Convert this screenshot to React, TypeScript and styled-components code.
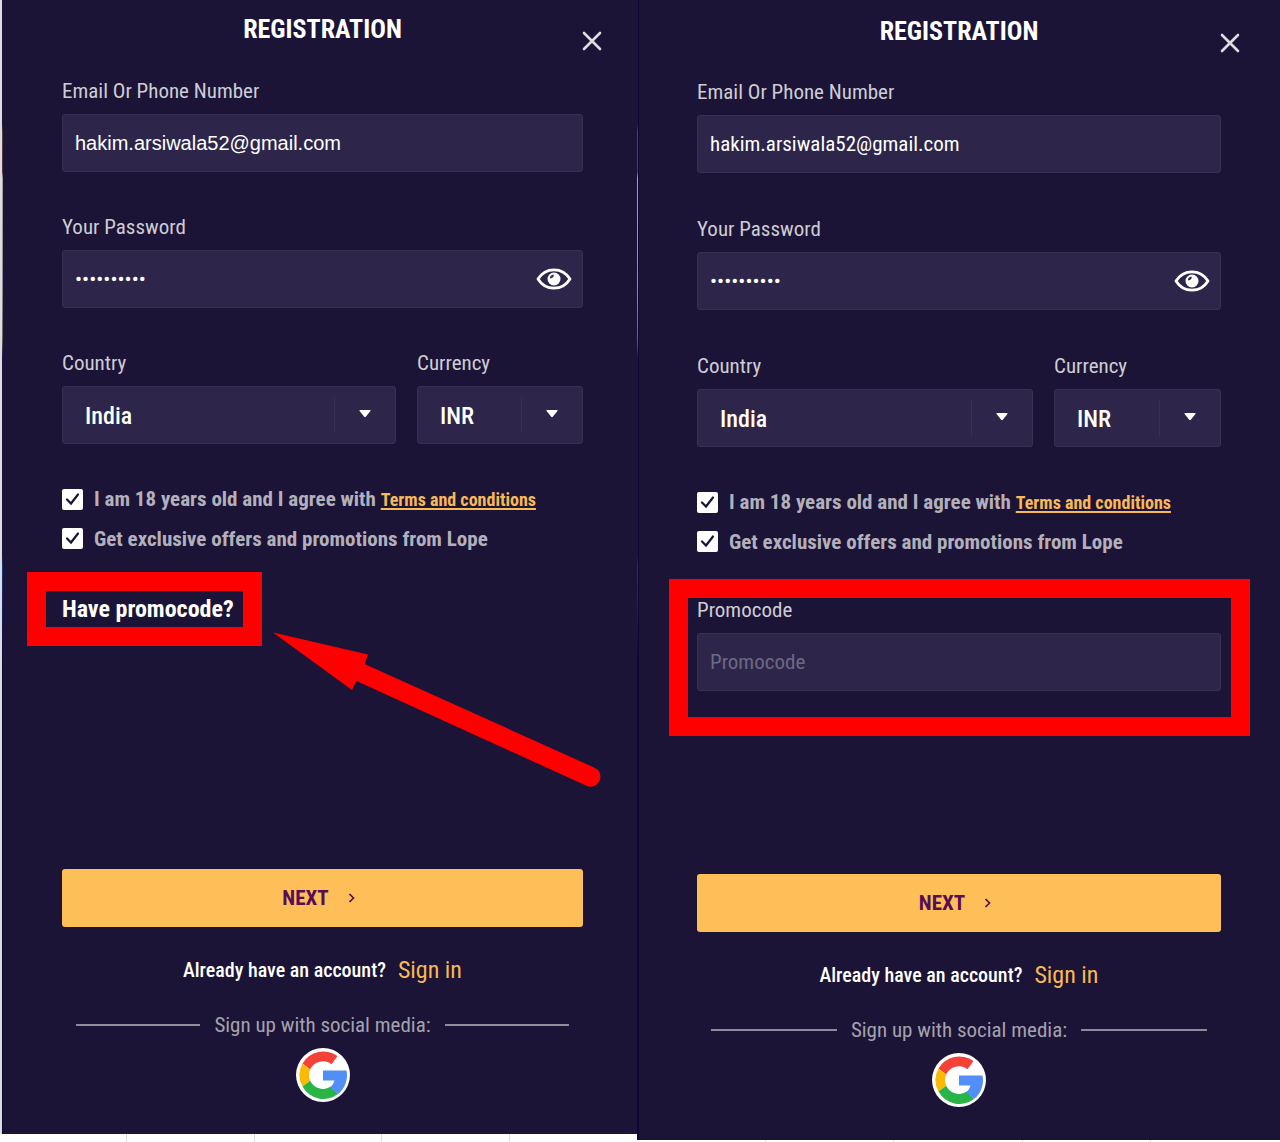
import React, { useId, useState } from "react";
import styled, { createGlobalStyle } from "styled-components";

const condensed = `"Roboto Condensed", "Liberation Sans Narrow", Roboto, "Liberation Sans", sans-serif`;
const regular = `"Liberation Sans", Arial, sans-serif`;

const edgeGlow = `linear-gradient(
  #1b1437 124px, #5c4040 132px, #5a3733 172px, #a5a2a6 178px, #8f8c99 290px,
  #6b6258 340px, #1b1437 358px, #1b1437 555px, #123a80 568px, #151a58 620px, #0c0a2c 660px
)`;

const GlobalStyle = createGlobalStyle`
  *, *::before, *::after { box-sizing: border-box; }
  body { margin: 0; background: #fff; font-family: ${condensed}; color: #fff; }
  button, input, select { font-family: inherit; color: inherit; margin: 0; }
`;

const Page = styled.main`
  display: grid;
  grid-template-columns: 637fr 643fr;
  align-items: start;
  min-height: 100vh;
`;

const Side = styled.section`
  display: flex;
  flex-direction: column;
  min-height: 100vh;
`;

const Panel = styled.form<{ $first: boolean }>`
  flex: 1;
  display: flex;
  flex-direction: column;
  background: ${edgeGlow} ${(p) => (p.$first ? "2px" : "0")} 0 / 1px 100% no-repeat,
    linear-gradient(90deg, ${(p) => (p.$first ? "#dcdce4" : "#0c0733")} 2px, #1b1437 2px);
  padding: ${(p) => (p.$first ? "0 54px 32px 62px" : "2px 59px 33px 60px")};
`;

const Sheet = styled.div<{ $height: number }>`
  display: grid;
  grid-template-columns: repeat(5, 1fr);
  height: ${(p) => p.$height}px;
  background: #fff;
`;

const Cell = styled.span`
  border-right: 1px solid #dcdce0;
  &:last-child { border-right: 0; }
`;

const Header = styled.header<{ $height: number }>`
  position: relative;
  padding-top: 13px;
  height: ${(p) => p.$height}px;
  text-align: center;
`;

const Title = styled.h1`
  margin: 0;
  font-size: 26px;
  line-height: 32px;
  font-weight: 700;
`;

const Close = styled.button`
  position: absolute;
  right: -20px;
  top: 30px;
  display: flex;
  padding: 0;
  border: 0;
  background: none;
`;

const Fields = styled.div<{ $gap: number }>`
  display: flex;
  flex-direction: column;
  gap: ${(p) => p.$gap}px;
`;

const FieldBox = styled.div`
  display: flex;
  flex-direction: column;
  gap: 11px;
  min-width: 0;
`;

const Label = styled.label`
  font-size: 21px;
  line-height: 24px;
  color: #cfcdd4;
`;

const Control = styled.div`
  position: relative;
  display: flex;
  align-items: center;
  height: 58px;
  background: #2d264a;
  border: 1px solid #383154;
  border-radius: 3px;
`;

const TextInput = styled.input<{ $plain?: boolean }>`
  flex: 1;
  min-width: 0;
  height: 100%;
  padding: 0 12px;
  border: 0;
  outline: 0;
  background: none;
  font-family: ${(p) => (p.$plain ? regular : condensed)};
  font-size: ${(p) => (p.$plain ? 20 : 21)}px;
  &::placeholder { color: #6f6984; opacity: 1; }
`;

const Eye = styled.button`
  display: flex;
  margin-right: 10px;
  padding: 0;
  border: 0;
  background: none;
`;

const Split = styled.div`
  display: grid;
  grid-template-columns: 334fr 166fr;
  gap: 21px;
`;

const Select = styled.select`
  appearance: none;
  flex: 1;
  min-width: 0;
  height: 100%;
  padding: 2px 62px 0 22px;
  border: 0;
  outline: 0;
  background: none;
  font-size: 24px;
  font-weight: 500;
  option { color: #000; }
`;

const Arrow = styled.span`
  position: absolute;
  right: 0;
  top: 10px;
  bottom: 10px;
  width: 61px;
  display: flex;
  align-items: center;
  justify-content: center;
  border-left: 1px solid #383154;
  pointer-events: none;
`;

const Checks = styled.div`
  display: flex;
  flex-direction: column;
  gap: 18px;
  margin: 45px 0 46px;
`;

const CheckRow = styled.div`
  display: flex;
  align-items: center;
  gap: 11px;
  height: 21px;
  font-size: 21px;
  line-height: 24px;
  font-weight: 700;
  color: #b3b0bb;
  white-space: nowrap;
`;

const Tick = styled.span`
  display: grid;
  width: 21px;
  height: 21px;
  > * { grid-area: 1 / 1; }
  svg { opacity: 0; pointer-events: none; }
  input:checked + svg { opacity: 1; }
`;

const TickBox = styled.input`
  appearance: none;
  width: 21px;
  height: 21px;
  margin: 0;
  border-radius: 2px;
  background: #fff;
`;

const Terms = styled.a`
  font-size: 18px;
  color: #f9b953;
  text-decoration: underline;
  text-decoration-thickness: 2px;
  text-underline-offset: 2px;
`;

const Slot = styled.div`
  position: relative;
  display: flex;
  flex-direction: column;
  align-items: stretch;
`;

const Toggle = styled.button`
  position: relative;
  align-self: flex-start;
  padding: 0;
  border: 0;
  background: none;
  font-size: 24px;
  line-height: 28px;
  font-weight: 700;
`;

const Frame = styled.span<{ $inset: string }>`
  position: absolute;
  inset: ${(p) => p.$inset};
  border: 19px solid #fe0000;
  pointer-events: none;
`;

const Pointer = styled.svg`
  position: absolute;
  left: 210px;
  top: 36px;
  pointer-events: none;
`;

const Footer = styled.footer`
  display: flex;
  flex-direction: column;
  align-items: stretch;
  margin-top: auto;
`;

const Next = styled.button`
  display: flex;
  align-items: center;
  justify-content: center;
  gap: 19px;
  height: 58px;
  padding: 0 8px 0 0;
  border: 0;
  border-radius: 3px;
  background: #febf58;
  color: #580d55;
  font-size: 21px;
  font-weight: 700;
`;

const Already = styled.p`
  display: flex;
  align-items: center;
  justify-content: center;
  gap: 12px;
  margin: 28px 0;
  font-size: 20px;
  line-height: 30px;
  font-weight: 500;
  white-space: nowrap;
`;

const SignIn = styled.a`
  font-size: 24px;
  font-weight: 400;
  color: #f9b953;
  text-decoration: none;
`;

const Social = styled.div`
  display: flex;
  align-items: center;
  gap: 14px;
  padding: 0 14px;
  margin-bottom: 11px;
  font-size: 21px;
  line-height: 24px;
  color: #a5a2ac;
  white-space: nowrap;
  &::before, &::after { content: ""; flex: 1; height: 2px; background: #8f8c99; }
`;

const Google = styled.button`
  display: flex;
  align-self: center;
  padding: 0;
  border: 0;
  border-radius: 50%;
  background: #fff;
`;

const GoogleMark = () => (
  <svg width="54" height="54" viewBox="0 0 54 54" aria-hidden="true">
    <path d="M6.500 15.500A24 24 0 0 1 41.500 8L35.500 16.200A14 14 0 0 0 14.200 21.500Z" fill="#f44336" />
    <path d="M6.500 15.500A24 24 0 0 0 6.500 38.600L14.200 32.800A14 14 0 0 1 14.200 21.500Z" fill="#fbbb05" />
    <path d="M6.500 38.600A24 24 0 0 0 42 46L34.600 38.600A14 14 0 0 1 14.200 32.800Z" fill="#28b446" />
    <path d="M27 22.400H50.500A24 24 0 0 1 42 46L34.400 39.200A14 14 0 0 0 38.500 32.400H27Z" fill="#518ef8" />
  </svg>
);

const Dropdown = ({ label, value }: { label: string; value: string }) => {
  const id = useId();
  return (
    <FieldBox>
      <Label htmlFor={id}>{label}</Label>
      <Control>
        <Select id={id} defaultValue={value}>
          <option>{value}</option>
        </Select>
        <Arrow>
          <svg width="12" height="12" viewBox="0 0 12 12" aria-hidden="true">
            <path d="M1 1H11Q12 1 11.400 2L6.800 7.800Q6 8.600 5.200 7.800L.6 2Q0 1 1 1Z" fill="#fff" />
          </svg>
        </Arrow>
      </Control>
    </FieldBox>
  );
};

const Check = ({ children, link }: { children: React.ReactNode; link?: React.ReactNode }) => {
  const id = useId();
  return (
    <CheckRow>
      <Tick>
        <TickBox id={id} type="checkbox" defaultChecked />
        <svg width="21" height="21" viewBox="0 0 21 21" fill="none" aria-hidden="true">
          <path d="M5 10.500L9 14.500L16 5.500" stroke="#1b1437" strokeWidth="2.200" strokeLinecap="round" />
        </svg>
      </Tick>
      <span>
        <label htmlFor={id}>{children}</label>
        {link}
      </span>
    </CheckRow>
  );
};

const Registration = ({ first, foot }: { first: boolean; foot: number }) => {
  const id = useId();
  const [shown, setShown] = useState(false);
  return (
    <Side>
      <Panel $first={first} onSubmit={(e) => e.preventDefault()}>
        <Header $height={first ? 79 : 78}>
          <Title>REGISTRATION</Title>
          <Close type="button" aria-label="Close">
            <svg width="22" height="22" viewBox="0 0 22 22" aria-hidden="true">
              <path d="M3 3L19 19M19 3L3 19" stroke="#dedce2" strokeWidth="2.600" strokeLinecap="round" />
            </svg>
          </Close>
        </Header>
        <Fields $gap={first ? 43 : 44}>
          <FieldBox>
            <Label htmlFor={id + "mail"}>Email Or Phone Number</Label>
            <Control>
              <TextInput id={id + "mail"} $plain={first} defaultValue="hakim.arsiwala52@gmail.com" />
            </Control>
          </FieldBox>
          <FieldBox>
            <Label htmlFor={id + "pass"}>Your Password</Label>
            <Control>
              <TextInput id={id + "pass"} type={shown ? "text" : "password"} defaultValue="password12" />
              <Eye type="button" aria-label="Show password" onClick={() => setShown(!shown)}>
                <svg width="36" height="24" viewBox="0 0 36 24" fill="none" aria-hidden="true">
                  <path d="M2 12C6 5.500 11.500 2.800 18 2.800S30 5.500 34 12C30 18.500 24.500 21.200 18 21.200S6 18.500 2 12Z" stroke="#fff" strokeWidth="2.800" strokeLinejoin="round" />
                  <circle cx="18" cy="12" r="6.500" fill="#fff" />
                  <path d="M14 11.500Q14 8 17.500 7.600Q18.600 10.800 14 11.500Z" fill="#2d264a" />
                </svg>
              </Eye>
            </Control>
          </FieldBox>
          <Split>
            <Dropdown label="Country" value="India" />
            <Dropdown label="Currency" value="INR" />
          </Split>
        </Fields>
        <Checks>
          <Check link={<Terms href="#terms">Terms and conditions</Terms>}>I am 18 years old and I agree with&nbsp;</Check>
          <Check>Get exclusive offers and promotions from Lope</Check>
        </Checks>
        <Slot>
          {first ? (
            <>
              <Toggle type="button">
                Have promocode?
                <Frame $inset="-23px -28px -23px -35px" />
              </Toggle>
              <Pointer width="332" height="158" viewBox="272 631 332 158" aria-hidden="true">
                <path d="M273 632.500L368 654.500L364.500 664L594 767.500A9.800 9.800 0 0 1 587 786L356.500 681L352 690Z" fill="#fe0000" />
              </Pointer>
            </>
          ) : (
            <FieldBox>
              <Label htmlFor={id + "promo"}>Promocode</Label>
              <Control>
                <TextInput id={id + "promo"} placeholder="Promocode" />
              </Control>
              <Frame $inset="-19px -29px -45px -28px" />
            </FieldBox>
          )}
        </Slot>
        <Footer>
          <Next type="submit">
            NEXT
            <svg width="7" height="10" viewBox="0 0 7 10" fill="none" aria-hidden="true">
              <path d="M1.500 1L5.500 5L1.500 9" stroke="#580d55" strokeWidth="1.700" />
            </svg>
          </Next>
          <Already>
            Already have an account? <SignIn href="#signin">Sign in</SignIn>
          </Already>
          <Social>Sign up with social media:</Social>
          <Google type="button" aria-label="Sign up with Google">
            <GoogleMark />
          </Google>
        </Footer>
      </Panel>
      <Sheet $height={foot}>
        {[0, 1, 2, 3, 4].map((n) => (
          <Cell key={n} />
        ))}
      </Sheet>
    </Side>
  );
};

export default function App() {
  return (
    <>
      <GlobalStyle />
      <Page>
        <Registration first foot={8} />
        <Registration first={false} foot={2} />
      </Page>
    </>
  );
}
